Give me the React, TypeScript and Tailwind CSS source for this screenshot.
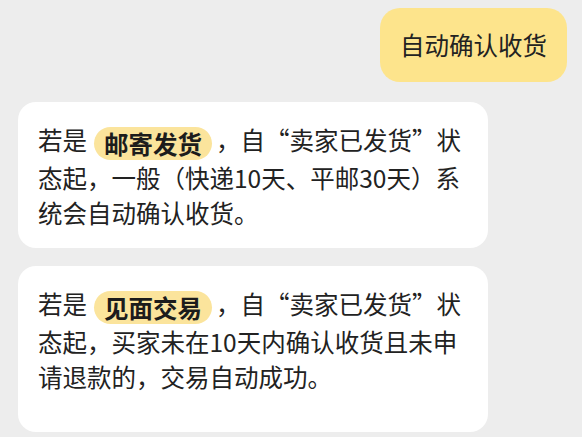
import React from "react";

const font = { fontFamily: '"Noto Sans CJK SC", "Noto Sans", sans-serif' };

function Tag({ children }: { children: React.ReactNode }) {
  return (
    <span className="ml-[7px] mr-[4px] inline-block rounded-full bg-[#fbe49c] px-[10px] align-middle text-[24.5px] font-bold leading-[33px] text-[#1c1c1c]">
      {children}
    </span>
  );
}

function Card({ tag, rest, extra }: { tag: string; rest: string; extra?: boolean }) {
  return (
    <div
      className={`w-[470px] rounded-[18px] bg-white pl-[20px] pr-[20px] pt-[20px] ${
        extra ? "pb-[38px]" : "pb-[18px]"
      }`}
    >
      <p className="text-[24.5px] leading-[35px] text-[#222222]">
        若是
        <Tag>{tag}</Tag>
        {rest}
      </p>
    </div>
  );
}

export default function App() {
  return (
    <div className="flex h-[437px] w-[582px] flex-col bg-[#ededed] pl-[18px] pr-[15px] pt-[8px]" style={font}>
      <div className="flex justify-end">
        <div className="flex h-[74px] items-center rounded-[20px] bg-[#fde48c] px-[20px] text-[24.5px] text-[#222222]">
          自动确认收货
        </div>
      </div>
      <div className="mt-[20px] flex flex-col gap-[18px]">
        <Card tag="邮寄发货" rest="，自“卖家已发货”状态起，一般（快递10天、平邮30天）系统会自动确认收货。" />
        <Card tag="见面交易" rest="，自“卖家已发货”状态起，买家未在10天内确认收货且未申请退款的，交易自动成功。" extra />
      </div>
    </div>
  );
}
